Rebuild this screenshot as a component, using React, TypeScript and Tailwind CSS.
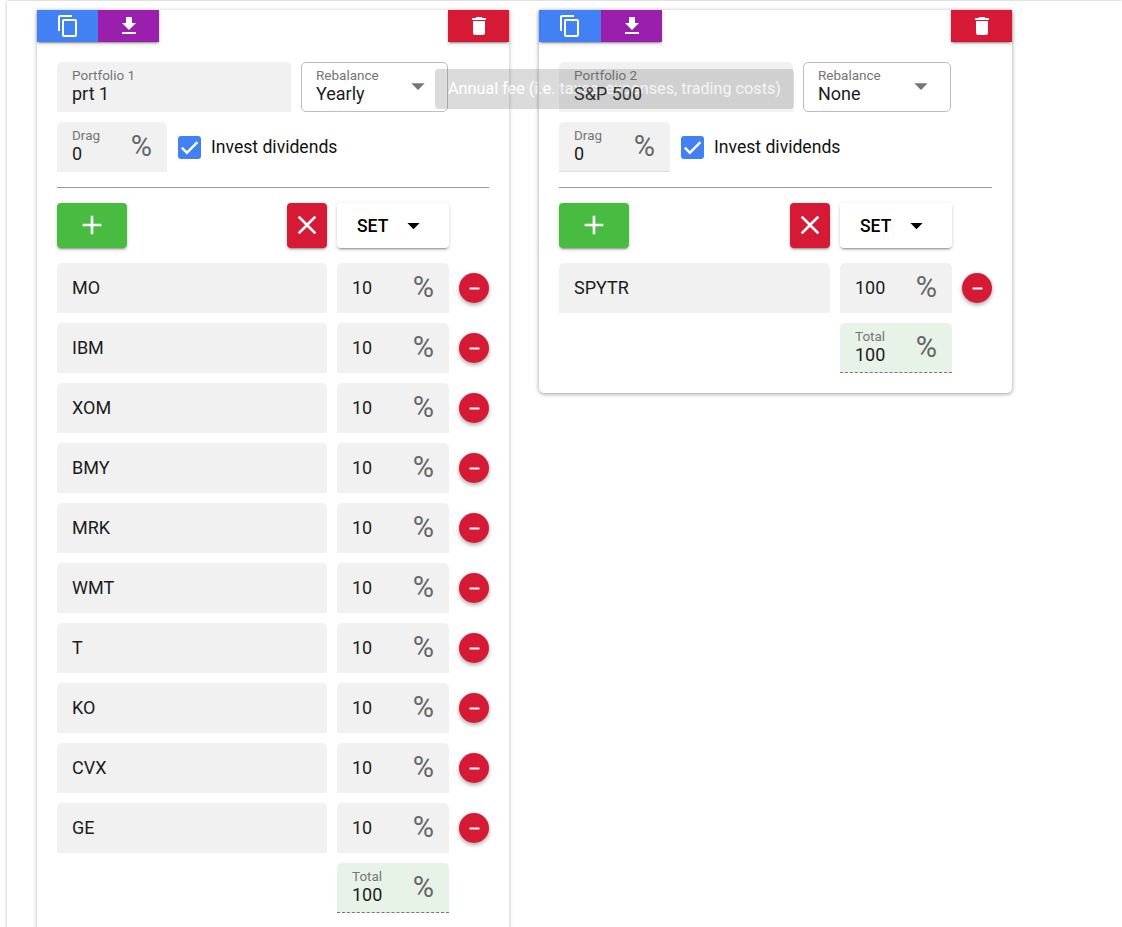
const fontStyle = "font-['Roboto',sans-serif]";

function Icon({ d, className }: { d: string; className: string }) {
  return (
    <svg viewBox="0 0 24 24" className={className} fill="currentColor">
      <path d={d} />
    </svg>
  );
}

const paths = {
  copy: "M16 1H4c-1.1 0-2 .9-2 2v14h2V3h12V1zm3 4H8c-1.1 0-2 .9-2 2v14c0 1.1.9 2 2 2h11c1.1 0 2-.9 2-2V7c0-1.1-.9-2-2-2zm0 16H8V7h11v14z",
  download: "M19 9h-4V3H9v6H5l7 7 7-7zM5 18v2h14v-2H5z",
  trash: "M6 19c0 1.1.9 2 2 2h8c1.1 0 2-.9 2-2V7H6v12zM19 4h-3.5l-1-1h-5l-1 1H5v2h14V4z",
  plus: "M19 13h-6v6h-2v-6H5v-2h6V5h2v6h6v2z",
  close: "M19 6.41L17.59 5 12 10.59 6.41 5 5 6.41 10.59 12 5 17.59 6.41 19 12 13.41 17.59 19 19 17.59 13.41 12z",
  arrow: "M7 10l5 5 5-5z",
  check: "M9 17.2L4.2 12.4l-1.9 1.9L9 21 22 8l-1.9-1.9z",
  minus: "M19 13.4H5v-2.8h14v2.8z",
};

const btnShadow = "shadow-[0_3px_1px_-2px_rgba(0,0,0,0.2),0_2px_2px_0_rgba(0,0,0,0.14),0_1px_5px_0_rgba(0,0,0,0.12)]";

function Field({
  label,
  value,
  suffix,
  width,
  total,
  underline,
}: {
  label?: string;
  value: string;
  suffix?: boolean;
  width: string;
  total?: boolean;
  underline?: boolean;
}) {
  return (
    <div
      className={`${width} h-[50px] rounded-t-[5px] pl-[15px] pr-[15px] pb-[2px] flex items-center justify-between ${
        total ? "bg-[#e8f3e8] border-b border-dashed border-[#777]" : "bg-[#f1f1f1]"
      } ${underline ? "border-b border-[#dedede]" : ""}`}
    >
      <div className="flex flex-col justify-center">
        {label && <span className="text-[13.5px] leading-[15px] text-[#757575]">{label}</span>}
        <span className="text-[18px] leading-[21px] text-[#1c1c1c]">{value}</span>
      </div>
      {suffix && <span className="text-[29px] leading-none text-[#666] mt-px">%</span>}
    </div>
  );
}

function Portfolio({
  name,
  label,
  rebalance,
  rows,
  cardClass,
  copyWidth,
  dragWidth,
  underline,
}: {
  name: string;
  label: string;
  rebalance: string;
  rows: { ticker: string; pct: string }[];
  cardClass: string;
  copyWidth: string;
  dragWidth: string;
  underline?: boolean;
}) {
  return (
    <div className={`shrink-0 bg-white rounded-b-[5px] ${cardClass}`}>
      {/* Card actions */}
      <div className="flex justify-between">
        <div className={`flex ${btnShadow}`}>
          <div className={`${copyWidth} h-[32px] bg-[#4281f3] text-white flex items-center justify-center`}>
            <Icon d={paths.copy} className="w-6 h-6" />
          </div>
          <div className="w-[61px] h-[32px] bg-[#9a1fad] text-white flex items-center justify-center">
            <Icon d={paths.download} className="w-6 h-6" />
          </div>
        </div>
        <div className={`w-[61px] h-[32px] bg-[#d61935] text-white flex items-center justify-center ${btnShadow}`}>
          <Icon d={paths.trash} className="w-6 h-6" />
        </div>
      </div>

      <div className="px-5 pt-5 pb-5">
        <div className="flex gap-[10px] pr-[41px]">
          <Field label={label} value={name} width="w-[234px]" />
          <div className="flex-1 h-[50px] border border-[#bdbdbd] rounded-[5px] pl-[14px] pr-[13px] pb-[2px] flex items-center justify-between">
            <div className="flex flex-col">
              <span className="text-[13.5px] leading-[15px] text-[#757575]">Rebalance</span>
              <span className="text-[18px] leading-[21px] text-[#1c1c1c]">{rebalance}</span>
            </div>
            <Icon d={paths.arrow} className="w-[32px] h-[32px] text-[#757575]" />
          </div>
        </div>

        <div className="flex items-center mt-[10px]">
          <Field label="Drag" value="0" suffix width={dragWidth} underline={underline} />
          <div className="w-[23px] h-[23px] ml-[11px] rounded-[3px] bg-[#4281f3] text-white flex items-center justify-center">
            <Icon d={paths.check} className="w-[21px] h-[21px] -mt-px" />
          </div>
          <span className="ml-[10px] text-[17.6px] text-[#111]">Invest dividends</span>
        </div>

        <div className="h-px bg-[#999] mt-[15px] mb-[15px]" />

        <div className="flex pr-[40px]">
          <div className={`w-[70px] h-[45px] rounded-[4px] bg-[#47bc41] text-white flex items-center justify-center ${btnShadow}`}>
            <Icon d={paths.plus} className="w-8 h-8 -mt-px" />
          </div>
          <div className={`w-[40px] h-[45px] ml-auto rounded-[4px] bg-[#d61935] text-white flex items-center justify-center ${btnShadow}`}>
            <Icon d={paths.close} className="w-8 h-8 -mt-px" />
          </div>
          <div className={`w-[112px] h-[45px] ml-[10px] rounded-[4px] bg-white text-black flex items-center pl-[20px] ${btnShadow}`}>
            <span className="text-[17.5px] font-medium pt-px">SET</span>
            <Icon d={paths.arrow} className="w-[29px] h-[29px] ml-[11px] -mt-px" />
          </div>
        </div>

        <div className="flex flex-col gap-[10px] mt-[15px]">
          {rows.map((row) => (
            <div key={row.ticker} className="flex items-center gap-[10px]">
              <Field value={row.ticker} width="flex-1" />
              <Field value={row.pct} suffix width="w-[112px]" />
              <div className="w-[30px] h-[30px] rounded-full bg-[#d61935] text-white flex items-center justify-center shadow-[0_2px_4px_rgba(0,0,0,0.35)]">
                <Icon d={paths.minus} className="w-[17px] h-[17px]" />
              </div>
            </div>
          ))}
          <div className="flex justify-end pr-[40px]">
            <Field label="Total" value="100" suffix total width="w-[112px]" />
          </div>
        </div>
      </div>
    </div>
  );
}

const first = ["MO", "IBM", "XOM", "BMY", "MRK", "WMT", "T", "KO", "CVX", "GE"].map((ticker) => ({
  ticker,
  pct: "10",
}));

export default function App() {
  return (
    <div className={`relative h-[927px] overflow-hidden bg-white ${fontStyle}`}>
      <div className="ml-[7px] mt-px h-[1000px] pt-[9px] pl-[30px] flex items-start gap-[30px] shadow-[0_0_3px_rgba(0,0,0,0.3)]">
        <Portfolio
          label="Portfolio 1"
          name="prt 1"
          rebalance="Yearly"
          rows={first}
          cardClass="w-[472px] shadow-[0_1px_4px_rgba(0,0,0,0.3)]"
          copyWidth="w-[61px]"
          dragWidth="w-[110px]"
        />
        <Portfolio
          label="Portfolio 2"
          name="S&P 500"
          rebalance="None"
          rows={[{ ticker: "SPYTR", pct: "100" }]}
          cardClass="w-[473px] shadow-[0_1px_4px_rgba(0,0,0,0.4)]"
          copyWidth="w-[62px]"
          dragWidth="w-[111px]"
          underline
        />
      </div>

      {/* Tooltip fading out */}
      <div className="absolute left-[435px] top-[69px] w-[359px] h-[40px] rounded-[4px] bg-[#616161] opacity-[0.22] text-white text-[16.2px] flex items-center justify-center">
        Annual fee (i.e. taxes, expenses, trading costs)
      </div>
    </div>
  );
}
